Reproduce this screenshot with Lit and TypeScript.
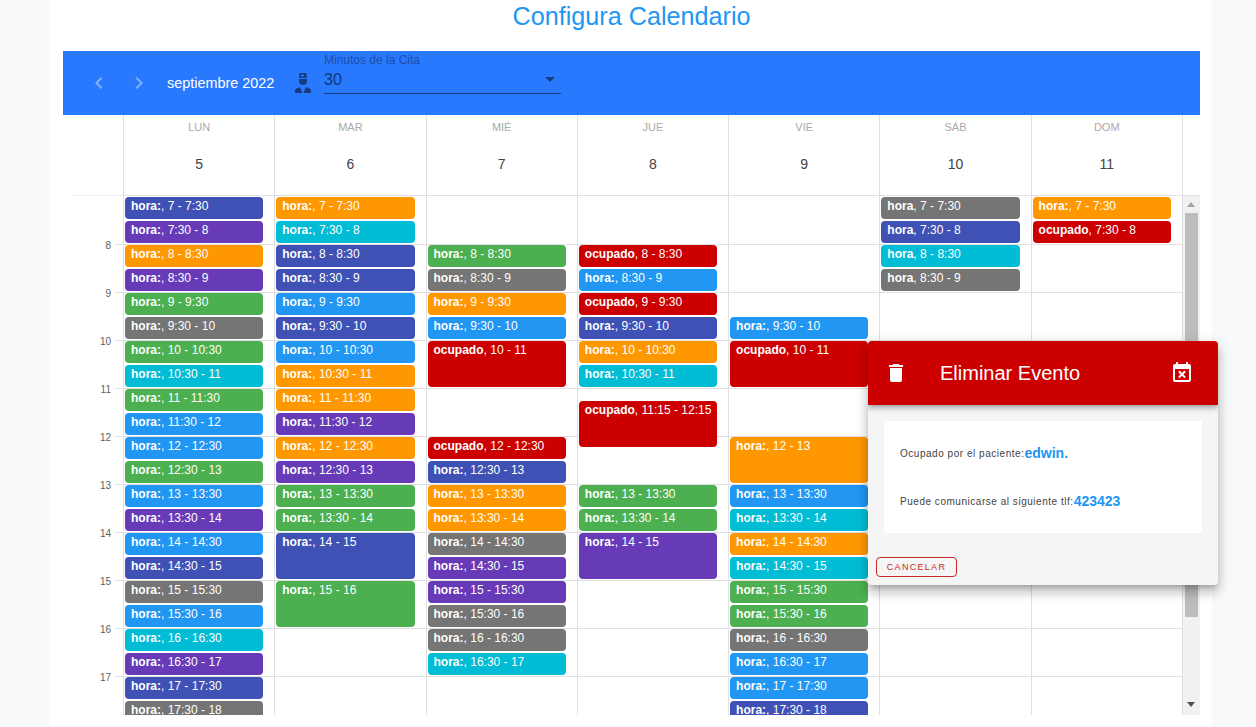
import { LitElement, html, css, svg } from "lit";
import { customElement } from "lit/decorators.js";

const C: Record<string, string> = {
  i: "#3f51b5", p: "#673ab7", o: "#ff9800", g: "#4caf50", y: "#757575",
  c: "#00bcd4", b: "#2196f3", r: "#cc0000",
};

type Ev = { s: number; e: number; c: string; l: string };

const fmt = (q: number) => {
  const h = Math.floor(q / 4) + 7;
  const m = (q % 4) * 15;
  return m ? `${h}:${String(m).padStart(2, "0")}` : `${h}`;
};

const ev = (s: number, e: number, c: string, l = "hora:"): Ev => ({
  s: (s - 7) * 4, e: (e - 7) * 4, c, l,
});
const run = (from: number, colours: string, l = "hora:"): Ev[] =>
  [...colours].map((c, i) => ev(from + i / 2, from + (i + 1) / 2, c, l));
const OC = "ocupado";

const DAYS: { n: string; d: number; ev: Ev[] }[] = [
  { n: "LUN", d: 5, ev: run(7, "ipopgygcgbbgbpbiybcpiy") },
  { n: "MAR", d: 6, ev: [...run(7, "ociibiboopopgg"), ev(14, 15, "i"), ev(15, 16, "g")] },
  { n: "MIÉ", d: 7, ev: [...run(8, "gyob"), ev(10, 11, "r", OC), ev(12, 12.5, "r", OC), ...run(12.5, "iooyppyyc")] },
  { n: "JUE", d: 8, ev: [ev(8, 8.5, "r", OC), ev(8.5, 9, "b"), ev(9, 9.5, "r", OC), ...run(9.5, "ioc"), ev(11.25, 12.25, "r", OC), ...run(13, "gg"), ev(14, 15, "p")] },
  { n: "VIE", d: 9, ev: [ev(9.5, 10, "b"), ev(10, 11, "r", OC), ev(12, 13, "o"), ...run(13, "bcocggybbi")] },
  { n: "SÁB", d: 10, ev: run(7, "yicy", "hora") },
  { n: "DOM", d: 11, ev: [ev(7, 7.5, "o"), ev(7.5, 8, "r", OC)] },
];

const HOURS = [8, 9, 10, 11, 12, 13, 14, 15, 16, 17];

const icon = (d: string, size: number) => html`<svg width=${size} height=${size} viewBox="0 0 24 24" fill="currentColor">${svg`<path d=${d}></path>`}</svg>`;

const I = {
  left: "M15.41,16.58L10.83,12L15.41,7.41L14,6L8,12L14,18L15.41,16.58Z",
  right: "M8.59,16.58L13.17,12L8.59,7.41L10,6L16,12L10,18L8.59,16.58Z",
  doctor: "M14.84,16.26C17.86,16.92 20,18.08 20,19.5V22H12.5L14.84,16.26M9.16,16.26L11.5,22H4V19.5C4,18.08 6.14,16.92 9.16,16.26M8,8H16V10A4,4 0 0,1 12,14A4,4 0 0,1 8,10V8M8,7L8.41,2.9C8.46,2.39 8.89,2 9.41,2H14.6C15.11,2 15.54,2.39 15.59,2.9L16,7H8M12,3H11V4H10V5H11V6H12V5H13V4H12V3Z",
  del: "M19,4H15.5L14.5,3H9.5L8.5,4H5V6H19M6,19A2,2 0 0,0 8,21H16A2,2 0 0,0 18,19V7H6V19Z",
  calx: "M9.6 17.2l2.4-2.4 2.4 2.4 1.4-1.4-2.4-2.4 2.4-2.4-1.4-1.4-2.4 2.4-2.4-2.4-1.4 1.4 2.4 2.4-2.4 2.4zM19 3h-1V1h-2v2H8V1H6v2H5c-1.11 0-1.99.9-1.99 2L3 19c0 1.1.89 2 2 2h14c1.1 0 2-.9 2-2V5c0-1.1-.9-2-2-2zm0 16H5V8h14v11z",
};

@customElement("app-root")
export class AppRoot extends LitElement {
  static styles = css`
    :host { display: block; height: 727px; overflow: hidden; background: #f8f9fa; font-family: "Liberation Sans", Arial, sans-serif; position: relative; }
    .card { width: 1162px; height: 727px; margin-left: 50px; background: #fff; padding: 0 12px 0 13px; box-sizing: border-box; display: flex; flex-direction: column; }
    h1 { margin: 0; height: 51px; flex: none; font-size: 25.2px; line-height: 32px; font-weight: 400; color: #2196f3; text-align: center; }
    .bar { height: 64px; flex: none; background: #2979ff; display: flex; align-items: center; color: #fff; padding-left: 24px; }
    .nav { width: 24px; height: 24px; margin-right: 16px; color: #fff; opacity: .4; display: flex; }
    .month { font-size: 14.4px; line-height: 20px; width: 108px; }
    .doc { color: #173a80; margin: 0 9px 0 16px; display: flex; width: 24px; }
    .select { width: 237px; height: 40px; align-self: flex-start; margin-top: 3px; position: relative; border-bottom: 1px solid #173a80; box-sizing: border-box; color: #12357a; }
    .select label { display: block; font-size: 12px; line-height: 12px; white-space: nowrap; color: #1d4ea8; }
    .select .val { font-size: 16px; line-height: 20px; margin-top: 4px; }
    .arrow { position: absolute; right: 6px; top: 23px; width: 0; height: 0; border: 5px solid transparent; border-top-color: #173a80; border-bottom-width: 0; }
    .head { display: grid; grid-template-columns: 60px repeat(7, 151.28px) 1fr; height: 81px; flex: none; box-sizing: border-box; }
    .corner { margin-left: 9px; border-bottom: 1px solid #eeeeee; }
    .hd { border-left: 1px solid #e0e0e0; border-bottom: 1px solid #e0e0e0; text-align: center; display: flex; flex-direction: column; }
    .hd .w { font-size: 11px; line-height: 12px; margin-top: 6px; color: #aaaaaa; }
    .hd .n { font-size: 14px; line-height: 20px; margin-top: 21px; color: #424242; }
    .body { flex: none; display: grid; grid-template-columns: 60px repeat(7, 151.28px) 1fr; height: 519px; overflow: hidden; }
    .times { display: flex; flex-direction: column; padding-top: 44px; align-items: stretch; }
    .times div { height: 48px; flex: none; font-size: 10px; line-height: 12px; color: #616161; padding-right: 12px; box-sizing: border-box; text-align: right;
      background: linear-gradient(#e0e0e0, #e0e0e0) right 0 top 4px / 8px 1px no-repeat; }
    .day { border-left: 1px solid #e0e0e0; display: grid; grid-auto-rows: 12px; grid-template-columns: 1fr; padding: 1px 11px 0 1px; align-content: start;
      background: repeating-linear-gradient(to bottom, transparent 0 47px, #e0e0e0 47px 48px) 0 1px; }
    .e { color: #fff; font-size: 12px; line-height: 18px; border-radius: 4px; padding: 0 6px; margin: 0 0 2px 0; overflow: hidden; white-space: nowrap; min-width: 0; }
    .e b { font-weight: 700; }
    .sb { border-left: 1px solid #e0e0e0; background: #f1f1f1; display: flex; flex-direction: column; align-items: center; padding: 0 2px; }
    .up, .down { width: 0; height: 0; border: 4px solid transparent; flex: none; }
    .up { border-bottom-color: #a3a3a3; border-top-width: 0; margin-top: 6px; border-bottom-width: 5px; }
    .thumb { width: 13px; height: 404px; background: #bdbdbd; margin-top: 6px; flex: none; }
    .down { border-top-color: #505050; border-bottom-width: 0; border-top-width: 5px; margin-top: 85px; }
    .dialog { position: absolute; left: 868px; top: 341px; width: 350px; height: 244px; background: #f5f5f5; border-radius: 4px; overflow: hidden; box-shadow: 0 5px 5px -3px rgba(0,0,0,.2), 0 8px 10px 1px rgba(0,0,0,.14), 0 3px 14px 2px rgba(0,0,0,.12); display: flex; flex-direction: column; }
    .dh { height: 64px; flex: none; background: #cc0000; color: #fff; display: flex; align-items: center; padding: 0 24px 0 16px; box-shadow: 0 2px 4px -1px rgba(0,0,0,.2), 0 4px 5px rgba(0,0,0,.14), 0 1px 10px rgba(0,0,0,.12); position: relative; }
    .dh .t { flex: 1; font-size: 20px; margin-left: 32px; line-height: 32px; }
    .dh svg { display: block; }
    .box { margin: 16px 16px 0; height: 112px; box-sizing: border-box; background: #fff; padding: 0 16px; display: flex; flex-direction: column; font-size: 10px; color: #424242; }
    .box p { margin: 0; height: 48px; flex: none; display: flex; align-items: center; letter-spacing: .53px; }
    .box p:first-child { margin-top: 8px; }
    .box span { font-weight: 700; color: #2196f3; font-size: 14px; letter-spacing: 0; }
    .act { padding: 24px 8px 0; display: flex; }
    .cancel { width: 81px; height: 20px; box-sizing: border-box; border: 1px solid #c62828; border-radius: 4px; color: #c62828; font: 9px/18px "Liberation Sans", Arial, sans-serif; letter-spacing: 1.3px; background: none; padding: 0; text-align: center; }
  `;

  render() {
    return html`
      <div class="card">
        <h1>Configura Calendario</h1>
        <div class="bar">
          <span class="nav">${icon(I.left, 24)}</span>
          <span class="nav">${icon(I.right, 24)}</span>
          <span class="month">septiembre 2022</span>
          <span class="doc">${icon(I.doctor, 24)}</span>
          <div class="select">
            <label>Minutos de la Cita</label>
            <div class="val">30</div>
            <span class="arrow"></span>
          </div>
        </div>
        <div class="head">
          <div class="corner"></div>
          ${DAYS.map((d) => html`<div class="hd"><span class="w">${d.n}</span><span class="n">${d.d}</span></div>`)}
          <div class="hd"></div>
        </div>
        <div class="body">
          <div class="times">${HOURS.map((h) => html`<div>${h}</div>`)}</div>
          ${DAYS.map((d) => html`<div class="day">
            ${d.ev.map((e) => html`<div class="e" style="grid-row:${e.s + 1} / ${e.e + 1};background:${C[e.c]}"><b>${e.l}</b>, ${fmt(e.s)} - ${fmt(e.e)}</div>`)}
          </div>`)}
          <div class="sb"><span class="up"></span><span class="thumb"></span><span class="down"></span></div>
        </div>
      </div>
      <div class="dialog">
        <div class="dh">
          ${icon(I.del, 24)}
          <span class="t">Eliminar Evento</span>
          ${icon(I.calx, 24)}
        </div>
        <div class="box">
          <p>Ocupado por el paciente:<span>edwin.</span></p>
          <p>Puede comunicarse al siguiente tlf:<span>423423</span></p>
        </div>
        <div class="act"><button class="cancel">CANCELAR</button></div>
      </div>
    `;
  }
}
